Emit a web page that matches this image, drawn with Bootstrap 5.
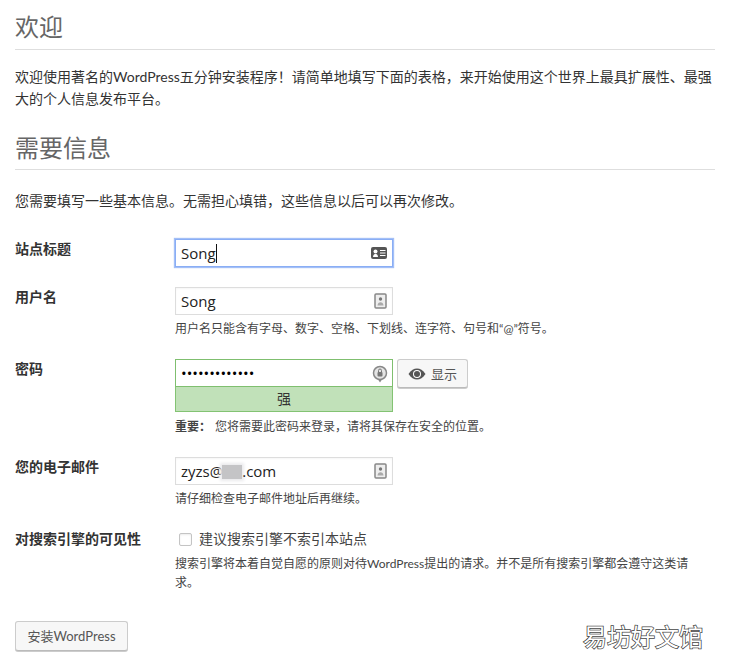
<!DOCTYPE html>
<html lang="zh-CN">
<head>
<meta charset="utf-8">
<title>WordPress 安装</title>
<link href="https://cdn.jsdelivr.net/npm/bootstrap@5.3.0/dist/css/bootstrap.min.css" rel="stylesheet">
<style>
html,body{height:100%;}
body{background:#fff;color:#444;font-family:Lato,"Noto Sans CJK SC",sans-serif;font-size:14px;line-height:22px;overflow:hidden;}
.wp-page{padding:0 14px 0 15px;}
.wp-title{font-size:24px;font-weight:400;line-height:36px;color:#666;margin:0;padding:9px 0 4px;border-bottom:1px solid #dedede;}
.wp-title.second{margin-top:11px;padding:9px 0 3px;}
.wp-text{margin:0;color:#333;}
.wp-intro{margin-top:16px;}
.wp-need{margin-top:20px;margin-bottom:27px;}
.wp-row{display:flex;}
.wp-label{width:160px;flex:none;font-weight:700;font-size:14px;color:#333;line-height:20px;}
.wp-field{position:relative;width:218px;}
.wp-input{display:block;width:218px;height:28px;border:1px solid #ddd;border-radius:0;padding:0 28px 0 5px;font-family:"Open Sans","Noto Sans CJK SC",sans-serif;font-size:15px;line-height:26px;color:#222;box-shadow:inset 0 1px 2px rgba(0,0,0,.04);background:#fff;}
.wp-input:focus{outline:none;}
.wp-focus,.wp-focus:focus{border:1px solid #8aaef5;box-shadow:0 0 1px 1px rgba(140,175,245,.8);color:#222;}
.wp-ok,.wp-ok:focus{border:1px solid #7fbf6f;box-shadow:none;font-size:15px;color:#000;}
.wp-strength{width:218px;height:26px;margin-top:-1px;background:#c1e1b9;border:1px solid #83c373;text-align:center;color:#333;font-size:14px;line-height:24px;}
.wp-icon{position:absolute;right:5px;top:6px;width:18px;height:16px;}
.wp-icon.round{top:5px;height:19px;}
.wp-caret{position:absolute;left:41px;top:5px;width:1px;height:19px;background:#111;}
.wp-blur{display:inline-block;width:20px;height:14px;margin-left:-1px;vertical-align:-2px;background:#c4c4c6;box-shadow:0 0 3px 2px #eaeaec;}
.wp-hint{font-size:12px;line-height:19px;color:#444;margin:4px 0 0;}
.wp-hint.tall{margin-top:5px;}
.wp-hint strong{margin-right:4px;}
.wp-btn{height:30px;padding:0 12px;border:1px solid #ccc;border-bottom-color:#bbb;border-radius:3px;background:#f7f7f7;color:#555;font-size:13px;line-height:26px;box-shadow:0 1px 0 #ccc;}
.wp-install{width:113px;padding:0;}
.wp-show{height:29px;margin-left:4px;width:71px;padding:0;display:flex;align-items:center;justify-content:center;gap:5px;}
.wp-check{width:13px;height:13px;margin:0 7px 0 4px;border:1px solid #c4c4c4;border-radius:2px;box-shadow:inset 0 1px 2px rgba(0,0,0,.08);appearance:none;background:#fff;flex:none;}
.wp-checkline{font-size:14px;color:#444;line-height:20px;}
.wp-mark{font-family:"Noto Sans CJK SC",sans-serif;font-size:24px;line-height:30px;color:#fff;-webkit-text-stroke:1.5px #444;paint-order:stroke fill;margin-right:12px;}
.wp-wide{width:520px;}
.wp-foot{margin-top:29px;}
.gap-a{margin-bottom:20px;}
.gap-b{margin-bottom:21px;}
.gap-c{margin-bottom:21px;}
.gap-d{margin-bottom:21px;}
.wp-hint.far{margin-top:5px;}
</style>
</head>
<body>
<main class="wp-page">
  <h1 class="wp-title">欢迎</h1>
  <p class="wp-text wp-intro">欢迎使用著名的WordPress五分钟安装程序！请简单地填写下面的表格，来开始使用这个世界上最具扩展性、最强大的个人信息发布平台。</p>
  <h1 class="wp-title second">需要信息</h1>
  <p class="wp-text wp-need">您需要填写一些基本信息。无需担心填错，这些信息以后可以再次修改。</p>
  <form>
    <div class="wp-row gap-a">
      <label class="wp-label" for="f1">站点标题</label>
      <div class="wp-field">
        <input id="f1" class="wp-input wp-focus" type="text" value="Song">
        <span class="wp-caret"></span>
        <svg class="wp-icon" viewBox="0 0 18 16"><rect x="1" y="2" width="16" height="12" rx="2" fill="#555"/><circle cx="5.5" cy="6.5" r="2" fill="#fff"/><path d="M3 12c0-4 5-4 5 0z" fill="#fff"/><path d="M10 5.5h5.5M10 8h5.5M10 10.5h5.5" stroke="#fff" stroke-width="1.2"/></svg>
      </div>
    </div>
    <div class="wp-row gap-b">
      <label class="wp-label" for="f2">用户名</label>
      <div>
        <div class="wp-field">
          <input id="f2" class="wp-input" type="text" value="Song">
          <svg class="wp-icon" viewBox="0 0 18 16"><rect x="5" y="1" width="11" height="14" rx="1" fill="#eee" stroke="#888" stroke-width="1.500"/><circle cx="10.500" cy="6" r="1.700" fill="#777"/><path d="M7.500 12.500c0-4.500 6-4.500 6 0z" fill="#aaa"/></svg>
        </div>
        <p class="wp-hint">用户名只能含有字母、数字、空格、下划线、连字符、句号和“@”符号。</p>
      </div>
    </div>
    <div class="wp-row gap-c">
      <label class="wp-label" for="f3">密码</label>
      <div>
        <div class="d-flex align-items-start">
          <div>
            <div class="wp-field">
              <input id="f3" class="wp-input wp-ok" type="password" value="Song123456789">
              <svg class="wp-icon round" viewBox="0 0 18 19"><circle cx="10" cy="9" r="6.500" fill="#e4e4e4" stroke="#888" stroke-width="1.500"/><rect x="7.500" y="8" width="5" height="4.500" rx="1" fill="#777"/><path d="M8.500 8V6.500a1.500 1.500 0 0 1 3 0V8" fill="none" stroke="#777"/><path d="M8 15.500h4l-2 3z" fill="#888"/></svg>
            </div>
            <div class="wp-strength">强</div>
          </div>
          <button type="button" class="wp-btn wp-show">
            <svg width="18" height="12" viewBox="0 0 18 12"><path d="M0.500 6C3 2 6 .5 9 .5S15 2 17.500 6C15 10 12 11.500 9 11.500S3 10 .5 6z" fill="#555"/><circle cx="9" cy="6" r="4" fill="#fff"/><circle cx="9" cy="6" r="3" fill="#555"/></svg>
            <span>显示</span>
          </button>
        </div>
        <p class="wp-hint tall"><strong>重要：</strong>您将需要此密码来登录，请将其保存在安全的位置。</p>
      </div>
    </div>
    <div class="wp-row gap-d">
      <label class="wp-label" for="f4">您的电子邮件</label>
      <div>
        <div class="wp-field">
          <div id="f4" class="wp-input">zyzs@<span class="wp-blur"></span>.com</div>
          <svg class="wp-icon" viewBox="0 0 18 16"><rect x="5" y="1" width="11" height="14" rx="1" fill="#eee" stroke="#888" stroke-width="1.500"/><circle cx="10.500" cy="6" r="1.700" fill="#777"/><path d="M7.500 12.500c0-4.500 6-4.500 6 0z" fill="#aaa"/></svg>
        </div>
        <p class="wp-hint">请仔细检查电子邮件地址后再继续。</p>
      </div>
    </div>
    <div class="wp-row">
      <span class="wp-label">对搜索引擎的可见性</span>
      <div class="wp-wide">
        <label class="d-flex align-items-center wp-checkline"><input type="checkbox" class="wp-check">建议搜索引擎不索引本站点</label>
        <p class="wp-hint far">搜索引擎将本着自觉自愿的原则对待WordPress提出的请求。并不是所有搜索引擎都会遵守这类请求。</p>
      </div>
    </div>
    <div class="d-flex justify-content-between align-items-center wp-foot">
      <button type="button" class="wp-btn wp-install">安装WordPress</button>
      <div class="wp-mark">易坊好文馆</div>
    </div>
  </form>
</main>
<script src="https://cdn.jsdelivr.net/npm/bootstrap@5.3.0/dist/js/bootstrap.bundle.min.js"></script>
</body>
</html>
